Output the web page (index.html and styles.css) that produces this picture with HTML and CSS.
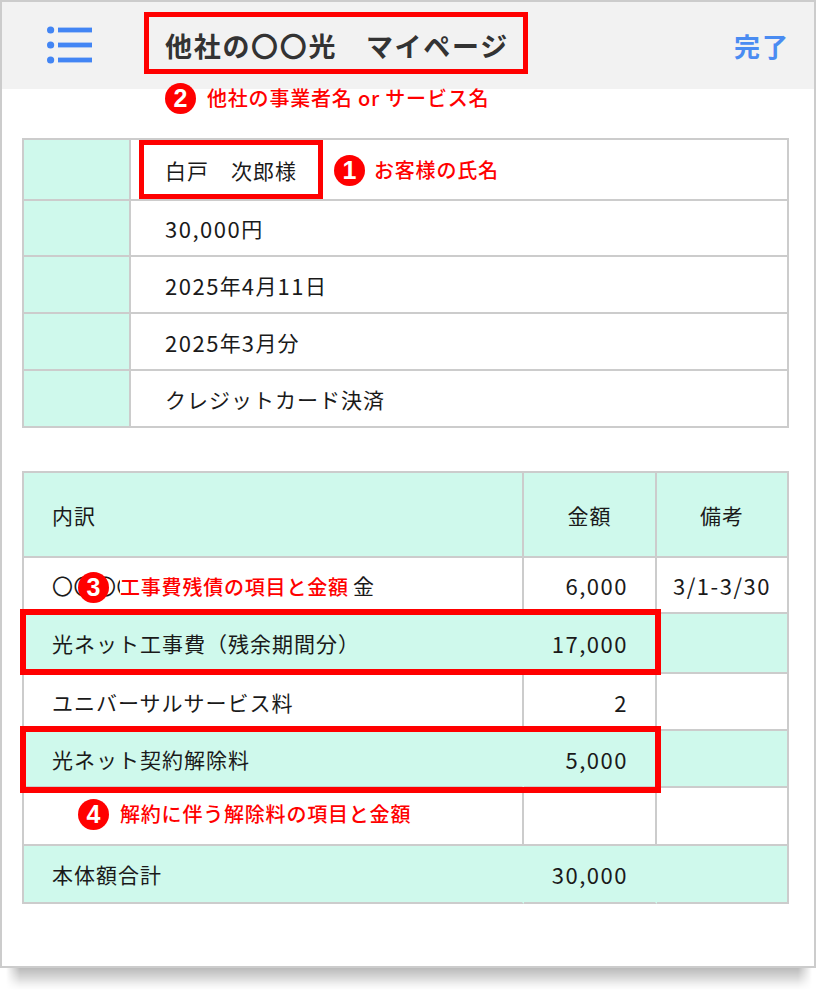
FILE: index.html
```html
<!DOCTYPE html>
<html lang="ja">
<head>
<meta charset="utf-8">
<title>他社の〇〇光 マイページ</title>
<link rel="stylesheet" href="styles.css">
</head>
<body>
<div class="frame">
  <header class="top">
    <svg class="menu" width="46" height="40" viewBox="0 0 46 40">
      <circle cx="3.6" cy="4" r="3.6" fill="#4285f4"/>
      <circle cx="3.6" cy="19" r="3.6" fill="#4285f4"/>
      <circle cx="3.6" cy="34" r="3.6" fill="#4285f4"/>
      <rect x="11" y="1.6" width="34" height="4.8" fill="#4285f4"/>
      <rect x="11" y="16.6" width="34" height="4.8" fill="#4285f4"/>
      <rect x="11" y="31.6" width="34" height="4.8" fill="#4285f4"/>
    </svg>
    <h1 class="title">他社の〇〇光　マイページ</h1>
    <span class="done">完了</span>
  </header>

  <main class="content">
    <div class="info">
      <div class="c k"></div><div class="c v">白戸　次郎様</div>
      <div class="c k"></div><div class="c v"><span class="num">30,000</span>円</div>
      <div class="c k"></div><div class="c v"><span class="num">2025</span>年<span class="num">4</span>月<span class="num">11</span>日</div>
      <div class="c k"></div><div class="c v"><span class="num">2025</span>年<span class="num">3</span>月分</div>
      <div class="c k"></div><div class="c v">クレジットカード決済</div>
    </div>

    <div class="bill">
      <div class="c hd">内訳</div><div class="c hd ctr">金額</div><div class="c hd ctr">備考</div>

      <div class="c tight">〇〇〇〇〇光ネット月額基本料金</div><div class="c amt"><span class="num">6,000</span></div><div class="c ctr"><span class="num">3/1-3/30</span></div>

      <div class="c m">光ネット工事費（残余期間分）</div><div class="c m amt"><span class="num">17,000</span></div><div class="c m last"></div>

      <div class="c">ユニバーサルサービス料</div><div class="c amt"><span class="num">2</span></div><div class="c"></div>

      <div class="c m">光ネット契約解除料</div><div class="c m amt"><span class="num">5,000</span></div><div class="c m last"></div>

      <div class="c"></div><div class="c"></div><div class="c"></div>

      <div class="c m">本体額合計</div><div class="c m amt"><span class="num">30,000</span></div><div class="c m last"></div>
    </div>
  </main>

  <div class="box box-title"></div>
  <div class="box box-name"></div>
  <div class="box box-work"></div>
  <div class="box box-cancel"></div>

  <div class="note note2"><span class="dot">2</span><span class="ntext">他社の事業者名 or サービス名</span></div>
  <div class="note note1"><span class="dot">1</span><span class="ntext">お客様の氏名</span></div>
  <div class="note note3"><span class="dot">3</span><span class="ntext cover">工事費残債の項目と金額</span></div>
  <div class="note note4"><span class="dot">4</span><span class="ntext">解約に伴う解除料の項目と金額</span></div>
</div>
<div class="shadow"></div>
</body>
</html>
```

FILE: styles.css
```css
* { box-sizing: border-box; }

html, body {
  margin: 0;
  padding: 0;
  background: #ffffff;
}

body {
  font-family: "Noto Sans CJK JP", "Noto Sans", sans-serif;
  color: #1a1a1a;
}

.frame {
  position: relative;
  width: 816px;
  height: 968px;
  border: 2px solid #cccccc;
  background: #ffffff;
}

.shadow {
  height: 22px;
  margin: 0 4px 0 6px;
  background: linear-gradient(to bottom, rgba(0, 0, 0, 0.27) 0%, rgba(0, 0, 0, 0.16) 40%, rgba(0, 0, 0, 0.05) 75%, rgba(0, 0, 0, 0) 100%);
  -webkit-mask-image: linear-gradient(to right, transparent 0, #000 14px, #000 calc(100% - 14px), transparent 100%);
  mask-image: linear-gradient(to right, transparent 0, #000 14px, #000 calc(100% - 14px), transparent 100%);
}

/* header */
.top {
  height: 87px;
  background: #f2f2f2;
  display: flex;
  align-items: center;
  padding: 0 24px 0 45px;
}

.menu {
  display: block;
  flex: none;
}

.title {
  margin: 0 0 0 72px;
  font-size: 27px;
  font-weight: 700;
  letter-spacing: 1.7px;
  color: #333333;
  line-height: 1;
  flex: 1;
}

.done {
  font-size: 26px;
  font-weight: 700;
  color: #4a8cf2;
  letter-spacing: 2px;
  line-height: 1;
}

/* content */
.content {
  padding: 49px 0 0 20px;
}

.info,
.bill {
  display: grid;
  width: 767px;
  border-top: 2px solid #cccccc;
  border-left: 2px solid #cccccc;
  font-size: 21px;
  letter-spacing: 1px;
}

.info {
  grid-template-columns: 107px 658px;
  grid-template-rows: 61px 56px 57px 57px 57px;
}

.bill {
  margin-top: 43px;
  grid-template-columns: 500px 133px 132px;
  grid-template-rows: 85px 56px 60px 57px 57px 58px 58px;
}

.c {
  display: flex;
  align-items: center;
  border-right: 2px solid #cccccc;
  border-bottom: 2px solid #cccccc;
  white-space: nowrap;
  overflow: hidden;
}

.bill .c {
  padding-left: 28px;
}

.bill .tight {
  letter-spacing: 0.5px;
}

.k {
  background: #cff9ec;
}

.info .v {
  padding-left: 34px;
}

.hd {
  background: #cff9ec;
}

.bill .ctr {
  justify-content: center;
  padding: 0;
}

.bill .amt {
  justify-content: flex-end;
  padding: 0 27px 0 0;
}

.num {
  font-size: 22px;
  letter-spacing: 1.5px;
}

.m {
  background: #cff9ec;
  border-right-color: #cff9ec;
}

.m.last {
  border-right-color: #cccccc;
}

/* annotation overlays */
.box {
  position: absolute;
  border: 5px solid #ff0000;
}

.box-title {
  left: 142px;
  top: 10px;
  width: 384px;
  height: 62px;
}

.box-name {
  left: 137px;
  top: 138px;
  width: 184px;
  height: 59px;
}

.box-work {
  left: 18px;
  top: 607px;
  width: 641px;
  height: 66px;
  border-width: 6px;
}

.box-cancel {
  left: 18px;
  top: 724px;
  width: 641px;
  height: 67px;
  border-width: 6px;
}

.note {
  position: absolute;
  display: flex;
  align-items: center;
  height: 30px;
}

.dot {
  flex: none;
  width: 31px;
  height: 31px;
  border-radius: 50%;
  background: #ff0000;
  color: #ffffff;
  font-family: "Liberation Sans", "DejaVu Sans", sans-serif;
  font-weight: 700;
  font-size: 25px;
  line-height: 31px;
  text-align: center;
}

.ntext {
  color: #ff0000;
  font-size: 20px;
  font-weight: 500;
  letter-spacing: 0.8px;
  line-height: 30px;
  white-space: nowrap;
}

.cover {
  background: #ffffff;
  padding-right: 3px;
}

.note2 {
  left: 163px;
  top: 81px;
  gap: 11px;
}

.note1 {
  left: 332px;
  top: 153px;
  gap: 9px;
}

.note3 {
  left: 76px;
  top: 570px;
  gap: 11px;
}

.note4 {
  left: 76px;
  top: 797px;
  gap: 11px;
}
```
